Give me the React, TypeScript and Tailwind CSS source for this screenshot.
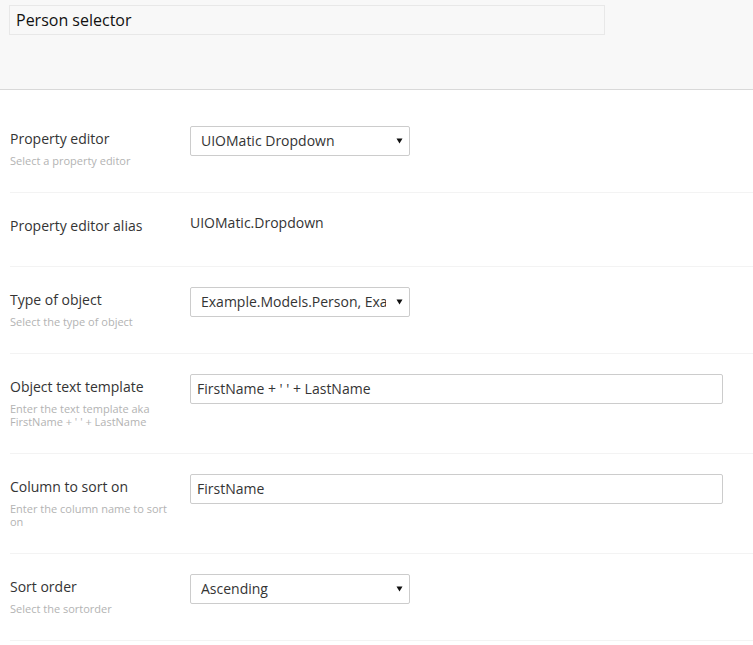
import React from "react";

function Caret() {
  return (
    <svg width="7" height="6" viewBox="0 0 7 6" className="shrink-0">
      <path d="M0.5 0.5 H6.5 L3.5 5.5 Z" fill="#111" />
    </svg>
  );
}

function Select({ value }: { value: string }) {
  return (
    <div className="flex h-[30px] w-[220px] items-center rounded-[2px] border border-[#cccccc] bg-white pl-[10px] pr-[6px]">
      <div className="flex-1 overflow-hidden whitespace-nowrap text-[14px] leading-[20px] text-[#343434]">
        {value}
      </div>
      <div className="flex w-[17px] justify-end">
        <Caret />
      </div>
    </div>
  );
}

function TextInput({ value }: { value: string }) {
  return (
    <div className="flex h-[30px] w-[533px] items-center rounded-[2px] border border-[#cccccc] bg-white px-[6px] text-[14px] leading-[20px] text-[#343434]">
      {value}
    </div>
  );
}

function Row({
  label,
  desc,
  children,
  pb = "pb-[25px]",
}: {
  label: string;
  desc?: string[];
  children: React.ReactNode;
  pb?: string;
}) {
  return (
    <div className={`ml-[10px] flex border-b border-[#f3f3f3] pt-5 ${pb}`}>
      <div className="w-[180px] shrink-0 pt-[1px]">
        <div className="text-[14px] leading-[24px] text-[#343434]">{label}</div>
        {desc && (
          <div className="mt-[3px] pr-2 text-[11px] leading-[13px] text-[#b3b3b3]">
            {desc.map((d, i) => (
              <div key={i}>{d}</div>
            ))}
          </div>
        )}
      </div>
      <div>{children}</div>
    </div>
  );
}

export default function App() {
  return (
    <div
      className="min-h-[645px] w-[753px] bg-white"
      style={{ fontFamily: '"Open Sans", "Noto Sans", sans-serif' }}
    >
      <div className="h-[90px] border-b border-[#d9d9d9] bg-[#f8f8f8] pl-[9px] pt-[5px]">
        <div className="flex h-[30px] w-[596px] items-center border border-[#e8e8e8] bg-[#f8f8f8] pl-[6px] text-[16px] text-[#111]">
          Person selector
        </div>
      </div>
      <div className="pt-4">
        <Row label="Property editor" desc={["Select a property editor"]}>
          <Select value="UIOMatic Dropdown" />
        </Row>
        <Row label="Property editor alias" pb="pb-[28px]">
          <div className="text-[14px] leading-[20px] text-[#343434]">UIOMatic.Dropdown</div>
        </Row>
        <Row label="Type of object" desc={["Select the type of object"]}>
          <Select value="Example.Models.Person, Example" />
        </Row>
        <Row
          label="Object text template"
          desc={["Enter the text template aka", "FirstName + ' ' + LastName"]}
        >
          <TextInput value="FirstName + ' ' + LastName" />
        </Row>
        <Row label="Column to sort on" desc={["Enter the column name to sort", "on"]}>
          <TextInput value="FirstName" />
        </Row>
        <Row label="Sort order" desc={["Select the sortorder"]}>
          <Select value="Ascending" />
        </Row>
      </div>
    </div>
  );
}
